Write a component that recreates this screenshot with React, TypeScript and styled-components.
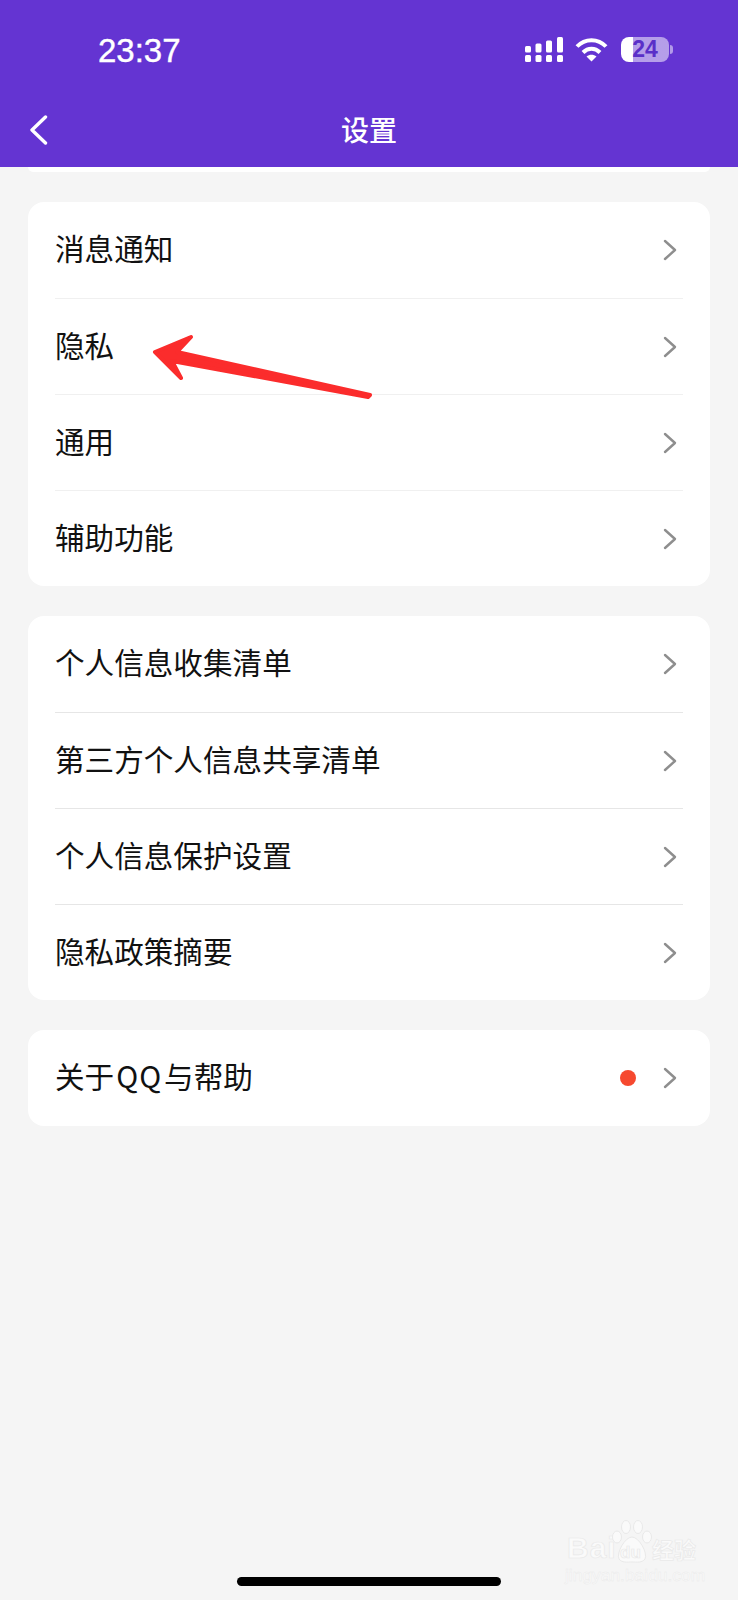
import React from 'react';
import styled, { createGlobalStyle } from 'styled-components';

const GlobalStyle = createGlobalStyle`
  html, body { margin: 0; padding: 0; background: #f5f5f5; }
  * { box-sizing: border-box; }
`;

const cjk = `"Noto Sans CJK SC", "Noto Sans", sans-serif`;

const Page = styled.div`
  position: relative;
  width: 738px;
  height: 1600px;
  overflow: hidden;
  display: flex;
  flex-direction: column;
  background: #f5f5f5;
  font-family: ${cjk};
`;

const Header = styled.header`
  height: 167px;
  flex: none;
  background: #6434d2;
  color: #fff;
  display: flex;
  flex-direction: column;
`;

const StatusBar = styled.div`
  height: 100px;
  padding: 33px 69px 0 98px;
  display: flex;
  justify-content: space-between;
  align-items: flex-start;
`;

const Clock = styled.div`
  font-family: "Liberation Sans", Arial, sans-serif;
  font-size: 33px;
  line-height: 36px;
  -webkit-text-stroke: 0.4px #fff;
`;

const StatusIcons = styled.div`
  display: flex;
  align-items: center;
  gap: 12px;
  margin-top: 4px;
`;

const Battery = styled.div`
  position: relative;
  width: 48px;
  height: 25px;
  margin-left: 1px;
  border-radius: 8px;
  background: linear-gradient(90deg, #fff 0 12px, rgba(255, 255, 255, 0.52) 12px);
  color: #5a2fc8;
  font-family: "Liberation Sans", Arial, sans-serif;
  font-weight: 700;
  font-size: 23px;
  line-height: 25px;
  text-align: center;
  &::after {
    content: '';
    position: absolute;
    right: -4px;
    top: 8px;
    width: 3px;
    height: 9px;
    border-radius: 0 3px 3px 0;
    background: rgba(255, 255, 255, 0.5);
  }
`;

const NavBar = styled.div`
  position: relative;
  height: 67px;
  padding-bottom: 9px;
  display: flex;
  align-items: center;
  justify-content: center;
`;

const BackButton = styled.svg`
  position: absolute;
  left: 29px;
  top: 15px;
`;

const NavTitle = styled.h1`
  margin: 0;
  font-size: 28px;
  font-weight: 500;
  line-height: 40px;
`;

const Sliver = styled.div`
  flex: none;
  height: 5px;
  margin: 0 28px 30px;
  background: #fff;
  border-radius: 0 0 14px 14px;
`;

const Groups = styled.div`
  display: flex;
  flex-direction: column;
  gap: 30px;
  padding: 0 28px;
`;

const Card = styled.section`
  background: #fff;
  border-radius: 16px;
  padding: 0 27px;
`;

const Row = styled.div<{ $line: string }>`
  height: 96px;
  display: flex;
  align-items: center;
  border-top: 1px solid ${props => props.$line};
  &:first-child { border-top: none; }
`;

const Label = styled.span`
  flex: 1;
  padding-bottom: 4px;
  font-size: 29.6px;
  line-height: 40px;
  color: #111;
`;

const LatinPart = styled.span`
  padding: 0 2px;
  letter-spacing: 1px;
`;

const Dot = styled.span`
  width: 16px;
  height: 16px;
  border-radius: 50%;
  background: #f6492f;
  margin-right: 27px;
`;

const Chevron = styled.svg`
  flex: none;
  margin-right: 6px;
`;

const Spacer = styled.div`
  flex: 1;
`;

const HomeBar = styled.div`
  flex: none;
  width: 264px;
  height: 9px;
  margin: 0 0 14px 237px;
  border-radius: 5px;
  background: #000;
`;

const Overlay = styled.svg`
  position: absolute;
  left: 0;
  top: 0;
  pointer-events: none;
`;

const Watermark = styled.div`
  position: absolute;
  left: 565px;
  top: 1520px;
  width: 134px;
  color: #fafafa;
  -webkit-text-stroke: 0.7px #e9e9e9;
`;

const MarkTop = styled.div`
  position: relative;
  height: 43px;
  display: flex;
  align-items: flex-end;
  justify-content: space-between;
`;

const MarkLatin = styled.span`
  margin-left: 2px;
  font-family: "Liberation Sans", Arial, sans-serif;
  font-weight: 700;
  font-size: 30px;
  letter-spacing: 1px;
  line-height: 30px;
`;

const MarkDu = styled.span`
  position: absolute;
  left: 55px;
  top: 24px;
  font-family: "Liberation Sans", Arial, sans-serif;
  font-weight: 700;
  font-size: 17px;
  line-height: 18px;
`;

const MarkCjk = styled.span`
  margin-right: 3px;
  font-size: 22px;
  line-height: 30px;
  font-weight: 700;
`;

const MarkPaw = styled.svg`
  position: absolute;
  left: 47px;
  top: 0;
`;

const MarkUrl = styled.div`
  font-family: "Liberation Sans", Arial, sans-serif;
  font-size: 17.4px;
  line-height: 20px;
  margin-top: 2px;
  white-space: nowrap;
  -webkit-text-stroke: 0.4px #e9e9e9;
`;

const groups = [
  { line: '#f0f0f0', rows: ['消息通知', '隐私', '通用', '辅助功能'] },
  { line: '#e6e6e6', rows: ['个人信息收集清单', '第三方个人信息共享清单', '个人信息保护设置', '隐私政策摘要'] },
  { line: '#e6e6e6', rows: ['关于QQ与帮助'] },
];

// QQ sits wider in the original than the CJK font spaces it
const renderLabel = (text: string) => {
  const parts = text.split('QQ');
  if (parts.length < 2) return text;
  return (
    <>
      {parts[0]}
      <LatinPart>QQ</LatinPart>
      {parts[1]}
    </>
  );
};

const App: React.FC = () => {
  return (
    <Page>
      <GlobalStyle />
      <Header>
        <StatusBar>
          <Clock>23:37</Clock>
          <StatusIcons>
            <svg width="38" height="25" viewBox="0 0 38 25" fill="#fff">
              <rect x="0" y="18" width="6" height="7" rx="1.5" />
              <rect x="10.5" y="18" width="6" height="7" rx="1.5" />
              <rect x="21" y="18" width="6" height="7" rx="1.5" />
              <rect x="32" y="18" width="6" height="7" rx="1.5" />
              <rect x="0" y="9" width="6" height="6.5" rx="1.5" />
              <rect x="10.5" y="6.5" width="6" height="9" rx="1.5" />
              <rect x="21" y="3.5" width="6" height="12" rx="1.5" />
              <rect x="32" y="0" width="6" height="15.5" rx="1.5" />
            </svg>
            <svg width="33" height="25" viewBox="0 0 33 25" fill="none" stroke="#fff" strokeWidth="4">
              <path d="M2 9.5 C10 1 23 1 31 9.5" />
              <path d="M8 15.5 C13 10.5 20 10.5 25 15.5" />
              <path d="M16.5 24.5 L11.5 19.5 C14.5 17 18.5 17 21.5 19.5 Z" fill="#fff" stroke="none" />
            </svg>
            <Battery>24</Battery>
          </StatusIcons>
        </StatusBar>
        <NavBar>
          <BackButton width="20" height="30" viewBox="0 0 20 30" fill="none" stroke="#fff" strokeWidth="3.4" strokeLinecap="round" strokeLinejoin="round">
            <path d="M16.5 2 L3 15 L16.5 28" />
          </BackButton>
          <NavTitle>设置</NavTitle>
        </NavBar>
      </Header>
      <Sliver />
      <Groups>
        {groups.map((group, i) => (
          <Card key={i}>
            {group.rows.map(text => (
              <Row key={text} $line={group.line}>
                <Label>{renderLabel(text)}</Label>
                {text === '关于QQ与帮助' && <Dot />}
                <Chevron width="14" height="22" viewBox="0 0 14 22" fill="none" stroke="#8e8e8e" strokeWidth="2.4" strokeLinecap="round" strokeLinejoin="round">
                  <path d="M2 2 L12 11 L2 20" />
                </Chevron>
              </Row>
            ))}
          </Card>
        ))}
      </Groups>
      <Spacer />
      <HomeBar />

      {/* red annotation arrow */}
      <Overlay width="738" height="1600" viewBox="0 0 738 1600">
        <path d="M155 352 L191 337 L177 352 L370 395 L368 397 L172 361 L181 378 Z" fill="#fb2c2c" stroke="#fb2c2c" strokeWidth="4" strokeLinejoin="round" />
      </Overlay>

      <Watermark>
        <MarkTop>
          <MarkPaw width="40" height="43" viewBox="0 0 40 43" fill="#fafafa" stroke="#e9e9e9" strokeWidth="1">
            <ellipse cx="5" cy="17" rx="4.5" ry="6" />
            <ellipse cx="14" cy="7" rx="4.5" ry="6.5" />
            <ellipse cx="26" cy="7" rx="4.5" ry="6.5" />
            <ellipse cx="35" cy="17" rx="4.5" ry="6" />
            <path d="M20 17 C27 17 36 33 33 39 C30 43 25 42 20 42 C15 42 10 43 7 39 C4 33 13 17 20 17 Z" />
          </MarkPaw>
          <MarkLatin>Bai</MarkLatin>
          <MarkDu>du</MarkDu>
          <MarkCjk>经验</MarkCjk>
        </MarkTop>
        <MarkUrl>jingyan.baidu.com</MarkUrl>
      </Watermark>
    </Page>
  );
};

export default App;
